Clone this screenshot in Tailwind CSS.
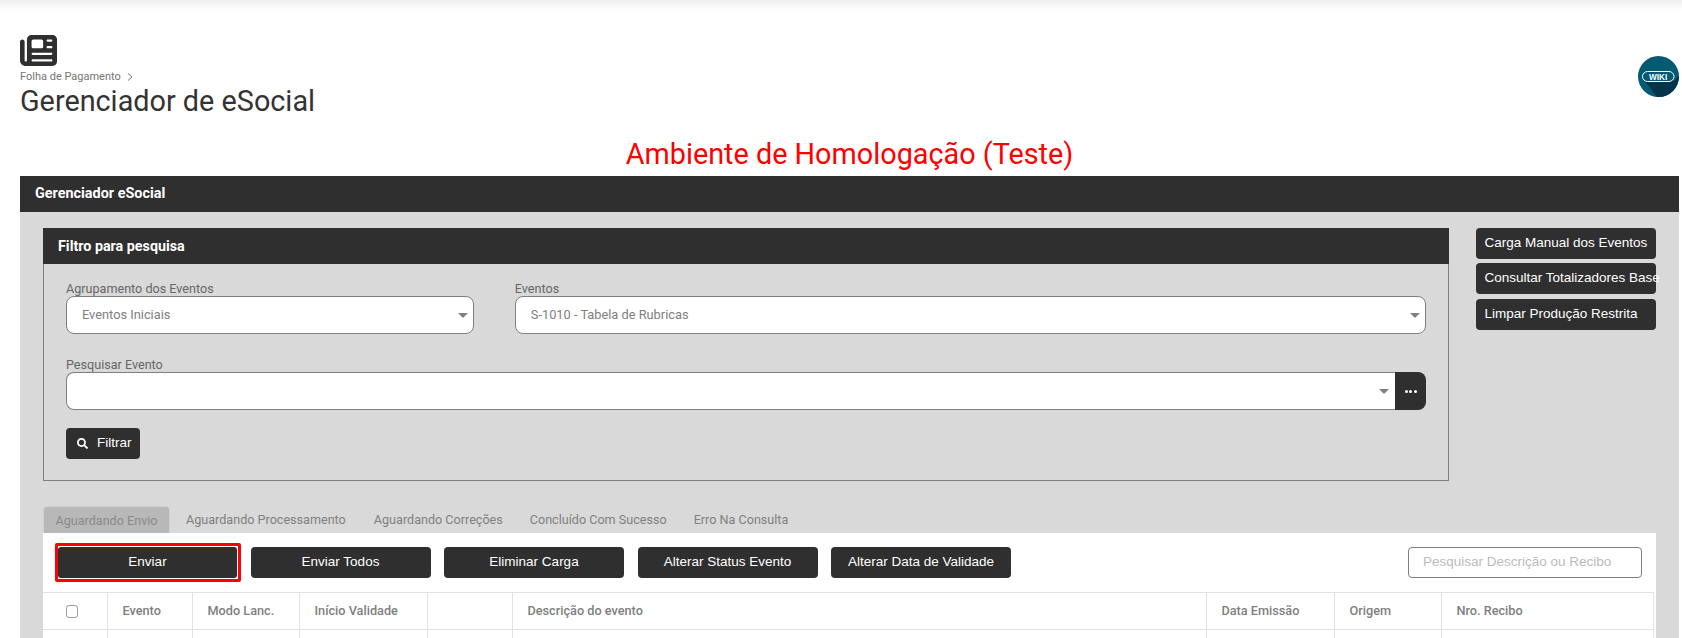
<!DOCTYPE html>
<html lang="pt-BR">
<head>
    <meta charset="UTF-8">
    <title>Gerenciador de eSocial</title>
    <script src="https://cdn.jsdelivr.net/npm/@tailwindcss/browser@4"></script>
</head>
<body class="bg-white h-[638px] overflow-hidden font-['Roboto',sans-serif]">
    <div class="h-[10px] bg-gradient-to-b from-[#efefef] to-white"></div>

    <!-- page header -->
    <header class="flex justify-between pl-[20px] pr-[3px] pt-[25px]">
        <div>
            <svg class="w-[37px] h-[31px] block" viewBox="0 32 512 448" preserveAspectRatio="none" fill="#2f2f2f"><path d="M96 96c0-35.3 28.7-64 64-64H448c35.3 0 64 28.7 64 64V416c0 35.3-28.7 64-64 64H80c-44.2 0-80-35.8-80-80V128c0-17.7 14.3-32 32-32s32 14.3 32 32V400c0 8.8 7.2 16 16 16s16-7.2 16-16V96zm64 24v80c0 13.3 10.7 24 24 24H296c13.3 0 24-10.7 24-24V120c0-13.3-10.7-24-24-24H184c-13.3 0-24 10.7-24 24zm208-8c0 8.8 7.2 16 16 16h48c8.8 0 16-7.2 16-16s-7.2-16-16-16H384c-8.8 0-16 7.2-16 16zm0 96c0 8.8 7.2 16 16 16h48c8.8 0 16-7.2 16-16s-7.2-16-16-16H384c-8.8 0-16 7.2-16 16zM160 304c0 8.8 7.2 16 16 16H432c8.8 0 16-7.2 16-16s-7.2-16-16-16H176c-8.8 0-16 7.2-16 16zm0 96c0 8.8 7.2 16 16 16H432c8.8 0 16-7.2 16-16s-7.2-16-16-16H176c-8.8 0-16 7.2-16 16z"/></svg>
            <div class="flex items-center h-[12px] mt-[5px] text-[11px] leading-[12px] text-[#757575]">
                <span>Folha de Pagamento</span>
                <svg class="w-[6px] h-[8px] ml-[6px]" viewBox="0 0 6 8" fill="none" stroke="#757575" stroke-width="1"><path d="M1 .5 5 4 1 7.5"/></svg>
            </div>
            <h1 class="text-[28.8px] leading-[36px] text-[#333]">Gerenciador de eSocial</h1>
        </div>
        <svg class="w-[41px] h-[41px] mt-[21px]" viewBox="0 0 41 41">
            <defs><clipPath id="wiki-clip"><circle cx="20.5" cy="20.5" r="20.5"/></clipPath></defs>
            <circle cx="20.5" cy="20.5" r="20.5" fill="#045a73"/>
            <path clip-path="url(#wiki-clip)" d="M7 25H36L41 20V48H24Z" fill="#03344a"/>
            <rect x="4.5" y="15.5" width="31.5" height="10" rx="5" fill="#045a73" stroke="#fff" stroke-width="1"/>
            <text x="20.2" y="23.6" text-anchor="middle" fill="#fff" font-family="Liberation Sans" font-size="8.2" font-weight="700">WIKI</text>
        </svg>
    </header>

    <p class="text-center text-[#ff0000] text-[28.8px] leading-[36px] mt-[17px] ml-[17px]">Ambiente de Homologação (Teste)</p>

    <!-- main panel -->
    <section class="ml-[20px] mr-[3px] mt-[4px]">
        <h2 class="h-[36px] bg-[#2f2f2f] text-white text-[14.4px] font-bold leading-[36px] pl-[15px]">Gerenciador eSocial</h2>

        <div class="bg-[#d9d9d9] h-[426px] pl-[23px] pt-[16px] overflow-hidden">
            <div class="flex">
                <!-- filter -->
                <div class="w-[1405.5px] h-[253px] border border-[#808080] border-t-0">
                    <h3 class="h-[36px] -mx-px bg-[#2f2f2f] text-white text-[14.3px] font-bold leading-[36px] pl-[15px]">Filtro para pesquisa</h3>
                    <div class="px-[22px] pt-[18px]">
                        <div class="flex gap-[41px]">
                            <div class="w-[408px]">
                                <label class="block text-[12.6px] leading-[14px] text-[#666]">Agrupamento dos Eventos</label>
                                <div class="h-[38px] bg-white border border-[#808080] rounded-[8px] flex items-center justify-between pl-[15px] pr-[5px] text-[12.8px] text-[#808080]">
                                    <span>Eventos Iniciais</span>
                                    <span class="w-0 h-0 border-x-[5px] border-x-transparent border-t-[5px] border-t-[#808080]"></span>
                                </div>
                            </div>
                            <div class="w-[911px]">
                                <label class="block text-[12.6px] leading-[14px] text-[#666]">Eventos</label>
                                <div class="h-[38px] bg-white border border-[#808080] rounded-[8px] flex items-center justify-between pl-[15px] pr-[5px] text-[12.8px] text-[#808080]">
                                    <span>S-1010 - Tabela de Rubricas</span>
                                    <span class="w-0 h-0 border-x-[5px] border-x-transparent border-t-[5px] border-t-[#808080]"></span>
                                </div>
                            </div>
                        </div>
                        <label class="block text-[12.6px] leading-[14px] text-[#666] mt-[24px]">Pesquisar Evento</label>
                        <div class="flex w-[1360px] h-[38px]">
                            <div class="flex-1 bg-white border border-[#808080] border-r-0 rounded-l-[8px] flex items-center justify-end pr-[6px]">
                                <span class="w-0 h-0 border-x-[5px] border-x-transparent border-t-[5px] border-t-[#808080]"></span>
                            </div>
                            <button class="w-[31px] shrink-0 bg-[#2f2f2f] rounded-r-[8px] flex items-center justify-center gap-[1.5px]">
                                <span class="w-[3px] h-[3px] rounded-full bg-white"></span>
                                <span class="w-[3px] h-[3px] rounded-full bg-white"></span>
                                <span class="w-[3px] h-[3px] rounded-full bg-white"></span>
                            </button>
                        </div>
                        <button class="mt-[18px] w-[74px] h-[31px] bg-[#2f2f2f] rounded-[4px] text-white text-[13.5px] font-['Liberation_Sans',sans-serif] flex items-center pl-[11px] gap-[9px]">
                            <svg class="w-[11px] h-[11px]" viewBox="0 0 512 512" fill="#fff"><path d="M505 442.7L405.3 343c-4.5-4.5-10.6-7-17-7H372c27.6-35.3 44-79.7 44-128C416 93.1 322.9 0 208 0S0 93.1 0 208s93.1 208 208 208c48.3 0 92.7-16.4 128-44v16.3c0 6.4 2.5 12.5 7 17l99.7 99.7c9.4 9.4 24.6 9.4 33.9 0l28.3-28.3c9.4-9.4 9.4-24.6.1-34zM208 336c-70.7 0-128-57.2-128-128 0-70.7 57.2-128 128-128 70.7 0 128 57.2 128 128 0 70.7-57.2 128-128 128z"/></svg>
                            Filtrar
                        </button>
                    </div>
                </div>

                <!-- side actions -->
                <div class="ml-[27px] w-[180px] flex flex-col text-white text-[13.5px] font-['Liberation_Sans',sans-serif]">
                    <button class="h-[31px] bg-[#2f2f2f] rounded-[4px] text-left pl-[9px] whitespace-nowrap">Carga Manual dos Eventos</button>
                    <button class="h-[31px] mt-[4px] bg-[#2f2f2f] rounded-[4px] text-left pl-[9px] whitespace-nowrap">Consultar Totalizadores Base</button>
                    <button class="h-[31px] mt-[5px] bg-[#2f2f2f] rounded-[4px] text-left pl-[9px] whitespace-nowrap">Limpar Produção Restrita</button>
                </div>
            </div>

            <!-- tabs -->
            <nav class="flex mt-[25px] h-[27px] text-[12.6px] leading-[27px] text-[#808080]">
                <a class="w-[127px] text-center bg-[#b8b8b8] rounded-t-[4px] border border-b-0 border-[#d0d0d0] text-[#8a8a8a]">Aguardando Envio</a>
                <a class="ml-[16px] mr-[28px]">Aguardando Processamento</a>
                <a class="mr-[27px]">Aguardando Correções</a>
                <a class="mr-[27px]">Concluído Com Sucesso</a>
                <a>Erro Na Consulta</a>
            </nav>

            <!-- grid panel -->
            <div class="w-[1613px] h-[120px] bg-white overflow-hidden">
                <div class="flex items-center justify-between h-[59px] pl-[15px] pr-[14px]">
                    <div class="flex gap-[13.5px] text-white text-[13.5px] font-['Liberation_Sans',sans-serif]">
                        <div class="w-[179px] h-[31px] relative">
                            <button class="w-full h-full bg-[#2f2f2f] rounded-[3px]">Enviar</button>
                            <span class="absolute -inset-x-[3.5px] -inset-y-[4px] border-[3px] border-[#ff0000] rounded-[2px]"></span>
                        </div>
                        <button class="w-[180px] h-[31px] bg-[#2f2f2f] rounded-[4px]">Enviar Todos</button>
                        <button class="w-[180px] h-[31px] bg-[#2f2f2f] rounded-[4px]">Eliminar Carga</button>
                        <button class="w-[180px] h-[31px] bg-[#2f2f2f] rounded-[4px]">Alterar Status Evento</button>
                        <button class="w-[180px] h-[31px] bg-[#2f2f2f] rounded-[4px]">Alterar Data de Validade</button>
                    </div>
                    <div class="w-[234px] h-[31px] border border-[#808080] rounded-[4px] pl-[14px] text-[13.5px] leading-[27px] text-[#bbbbbb] font-['Liberation_Sans',sans-serif]">Pesquisar Descrição ou Recibo</div>
                </div>
                <table class="table-fixed border-collapse w-[1611px] text-[12.7px] font-medium text-[#808080]">
                    <colgroup>
                        <col class="w-[64px]"><col class="w-[85px]"><col class="w-[107px]"><col class="w-[128px]"><col class="w-[85px]"><col class="w-[694px]"><col class="w-[128px]"><col class="w-[107px]"><col>
                    </colgroup>
                    <tr class="h-[37px] text-left">
                        <th class="border border-l-0 border-[#dee2e6] pl-[23px] font-medium"><span class="block w-[12px] h-[13px] border border-[#9a9a9a] rounded-[3px]"></span></th>
                        <th class="border border-[#dee2e6] pl-[15px] font-medium">Evento</th>
                        <th class="border border-[#dee2e6] pl-[15px] font-medium">Modo Lanc.</th>
                        <th class="border border-[#dee2e6] pl-[15px] font-medium">Início Validade</th>
                        <th class="border border-[#dee2e6]"></th>
                        <th class="border border-[#dee2e6] pl-[15px] font-medium">Descrição do evento</th>
                        <th class="border border-[#dee2e6] pl-[15px] font-medium">Data Emissão</th>
                        <th class="border border-[#dee2e6] pl-[15px] font-medium">Origem</th>
                        <th class="border border-[#dee2e6] pl-[15px] font-medium">Nro. Recibo</th>
                    </tr>
                    <tr class="h-[37px]">
                        <td class="border border-l-0 border-[#dee2e6]"></td><td class="border border-[#dee2e6]"></td><td class="border border-[#dee2e6]"></td><td class="border border-[#dee2e6]"></td><td class="border border-[#dee2e6]"></td><td class="border border-[#dee2e6]"></td><td class="border border-[#dee2e6]"></td><td class="border border-[#dee2e6]"></td><td class="border border-[#dee2e6]"></td>
                    </tr>
                </table>
            </div>
        </div>
    </section>
</body>
</html>
